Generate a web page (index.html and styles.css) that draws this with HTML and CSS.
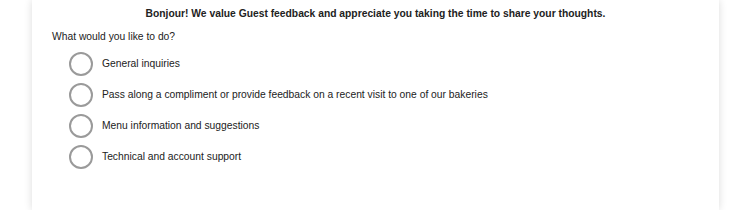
FILE: index.html
```html
<!DOCTYPE html>
<html lang="en">
<head>
  <meta charset="UTF-8">
  <title>Guest feedback</title>
  <meta name="viewport" content="width=device-width, initial-scale=1.0">
  <link rel="stylesheet" href="styles.css">
</head>
<body>
  <div class="card">
    <p class="intro">Bonjour! We value Guest feedback and appreciate you taking the time to share your thoughts.</p>

    <p class="question">What would you like to do?</p>

    <div class="options">
      <label class="option">
        <input type="radio" name="topic" value="general">
        <span>General inquiries</span>
      </label>
      <label class="option">
        <input type="radio" name="topic" value="feedback">
        <span>Pass along a compliment or provide feedback on a recent visit to one of our bakeries</span>
      </label>
      <label class="option">
        <input type="radio" name="topic" value="menu">
        <span>Menu information and suggestions</span>
      </label>
      <label class="option">
        <input type="radio" name="topic" value="support">
        <span>Technical and account support</span>
      </label>
    </div>
  </div>
</body>
</html>
```

FILE: styles.css
```css
html, body {
  height: 100%;
}

body {
  margin: 0;
  background: #fff;
  font-family: "Liberation Sans", Arial, sans-serif;
  color: #222;
}

.card {
  width: 687px;
  height: 100%;
  margin-left: 32px;
  background: #fff;
  box-shadow: 0 0 8px rgba(0, 0, 0, 0.14);
  box-sizing: border-box;
  padding: 7px 20px 0;
}

.intro {
  margin: 0;
  text-align: center;
  font-size: 10.3px;
  font-weight: bold;
  line-height: 14px;
}

.question {
  margin: 9px 0 0;
  font-size: 10.3px;
  line-height: 14px;
}

.options {
  margin-top: 4px;
  padding-left: 17px;
}

.option {
  display: flex;
  align-items: center;
  height: 31px;
  font-size: 10.3px;
  cursor: pointer;
}

.option input {
  appearance: none;
  -webkit-appearance: none;
  width: 24px;
  height: 24px;
  margin: 0 9px 0 0;
  border: 2px solid #9a9a9a;
  border-radius: 50%;
  background: #fff;
  box-sizing: border-box;
}

.option input:checked {
  background: radial-gradient(#555 40%, #fff 45%);
}
```
